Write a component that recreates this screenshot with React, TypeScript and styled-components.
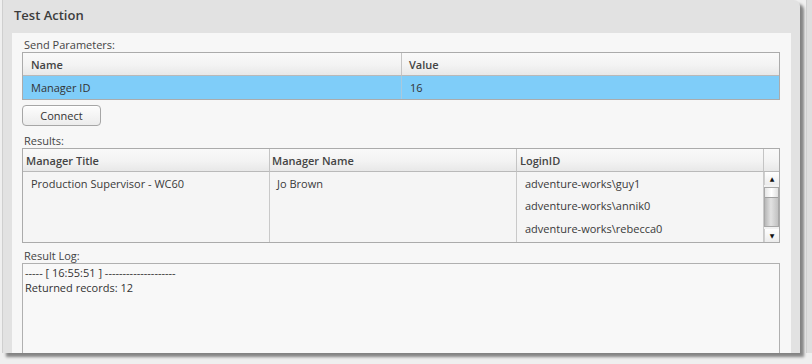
import React from "react";
import styled, { createGlobalStyle } from "styled-components";

const Global = createGlobalStyle`
  html, body { margin: 0; padding: 0; }
  body {
    width: 812px; height: 364px; overflow: hidden;
    background: #efefef;
    font-family: "Open Sans", "DejaVu Sans", sans-serif;
    font-size: 11px; color: #3a3a3a;
  }
`;

const Stage = styled.div`
  display: flex;
  width: 812px;
  height: 364px;
  padding: 0 0 0 2px;
  box-sizing: border-box;
`;

const Window = styled.div`
  width: 798px;
  height: 353px;
  display: flex;
  flex-direction: column;
  background-color: #e2e2e2;
  background-image: radial-gradient(#d9d9d9 0.6px, transparent 0.7px);
  background-size: 2px 2px;
  border-left: 1px solid #cfcfcf;
  border-top-right-radius: 6px;
  box-shadow: 4px 4px 3px rgba(0, 0, 0, 0.45);
  box-sizing: border-box;
`;

const TitleBar = styled.div`
  height: 33px;
  display: flex;
  align-items: center;
  padding: 0 0 3px 11px;
  box-sizing: border-box;
  font-size: 13px;
  font-weight: 600;
  color: #3c3c3c;
`;

const Panel = styled.div`
  flex: 1;
  margin: 0 9px 0 9px;
  background: #f7f7f7;
  padding: 4px 11px 0 10px;
  display: flex;
  flex-direction: column;
  min-height: 0;
`;

const Label = styled.div<{ $mt?: number }>`
  height: 15px;
  line-height: 15px;
  margin-top: ${(p) => p.$mt ?? 0}px;
  margin-left: 2px;
  color: #444;
  font-size: 11px;
`;

const Grid = styled.div<{ $cols: string }>`
  display: grid;
  grid-template-columns: ${(p) => p.$cols};
  border: 1px solid #ababab;
  background: #f5f5f5;
`;

const HeadCell = styled.div<{ $pad?: number; $last?: boolean }>`
  height: 22px;
  display: flex;
  align-items: center;
  padding-left: ${(p) => p.$pad ?? 8}px;
  font-weight: 600;
  font-size: 11px;
  color: #444;
  background: linear-gradient(#f9f9f9, #f3f3f3 55%, #e8e8e8);
  border-bottom: 1px solid #b9b9b9;
  border-right: ${(p) => (p.$last ? "none" : "1px solid #c4c4c4")};
  white-space: nowrap;
`;

const RowCell = styled.div<{ $selected?: boolean; $last?: boolean }>`
  height: 23px;
  display: flex;
  align-items: center;
  padding-left: 8px;
  font-size: 11px;
  color: #333;
  background: ${(p) => (p.$selected ? "#7fcdf9" : "transparent")};
  border-right: ${(p) => (p.$last ? "none" : "1px solid #a9c9dd")};
`;

const Button = styled.button`
  margin-top: 5px;
  width: 79px;
  height: 21px;
  border: 1px solid #a6a6a6;
  border-radius: 4px;
  background: linear-gradient(#fdfdfd, #ececec);
  font-family: inherit;
  font-size: 11px;
  color: #333;
  padding: 0;
  box-shadow: 0 1px 0 #fff inset;
`;

const BodyCol = styled.div<{ $last?: boolean }>`
  height: 70px;
  display: flex;
  flex-direction: column;
  border-right: ${(p) => (p.$last ? "none" : "1px solid #c9c9c9")};
`;

const BodyLine = styled.div<{ $pad?: number }>`
  height: 22.5px;
  display: flex;
  align-items: center;
  padding-left: ${(p) => p.$pad ?? 8}px;
  font-size: 11px;
  color: #3a3a3a;
  white-space: nowrap;
`;

const ScrollBar = styled.div`
  height: 70px;
  display: flex;
  flex-direction: column;
  background: #f2f2f2;
`;

const ScrollBtn = styled.div`
  height: 13px;
  display: flex;
  align-items: center;
  justify-content: center;
  font-size: 6px;
  color: #111;
  background: linear-gradient(#ffffff, #ececec);
  border-left: 1px solid #cfcfcf;
`;

const Track = styled.div`
  flex: 1;
  margin: 2px 0 2px 0;
  display: flex;
  flex-direction: column;
  background: linear-gradient(90deg, #b8b8b8, #e2e2e2 45%, #c2c2c2);
  border: 1px solid #a8a8a8;
`;

const Thumb = styled.div`
  height: 9px;
  background: linear-gradient(90deg, #e6e6e6, #ffffff 50%, #e0e0e0);
  border-bottom: 1px solid #a0a0a0;
`;

const LogBox = styled.div`
  flex: 1;
  border: 1px solid #b0b0b0;
  border-bottom: none;
  background: #f8f8f8;
  padding: 1px 2px;
  font-size: 11px;
  line-height: 15px;
  color: #333;
`;

const Side = styled.div`
  flex: 1;
  margin-left: 6px;
  background: #dedede;
  height: 353px;
  border-left: 1px solid #cfcfcf;
`;

export default function App() {
  return (
    <>
      <Global />
      <Stage>
        <Window>
          <TitleBar>Test Action</TitleBar>
          <Panel>
            <Label>Send Parameters:</Label>
            <Grid $cols="379px 1fr">
              <HeadCell>Name</HeadCell>
              <HeadCell $last $pad={7}>Value</HeadCell>
              <RowCell $selected>Manager ID</RowCell>
              <RowCell $selected $last>16</RowCell>
            </Grid>
            <div>
              <Button>Connect</Button>
            </div>
            <Label $mt={7}>Results:</Label>
            <Grid $cols="247px 247px 247px 1fr">
              <HeadCell $pad={3}>Manager Title</HeadCell>
              <HeadCell $pad={2}>Manager Name</HeadCell>
              <HeadCell $pad={3}>LoginID</HeadCell>
              <HeadCell $last $pad={0} />
              <BodyCol>
                <BodyLine>Production Supervisor - WC60</BodyLine>
              </BodyCol>
              <BodyCol>
                <BodyLine $pad={7}>Jo Brown</BodyLine>
              </BodyCol>
              <BodyCol>
                <BodyLine>adventure-works\guy1</BodyLine>
                <BodyLine>adventure-works\annik0</BodyLine>
                <BodyLine>adventure-works\rebecca0</BodyLine>
              </BodyCol>
              <ScrollBar>
                <ScrollBtn>▲</ScrollBtn>
                <Track>
                  <Thumb />
                </Track>
                <ScrollBtn>▼</ScrollBtn>
              </ScrollBar>
            </Grid>
            <Label $mt={5}>Result Log:</Label>
            <LogBox>
              <div>----- [ 16:55:51 ] --------------------</div>
              <div>Returned records: 12</div>
            </LogBox>
          </Panel>
        </Window>
        <Side />
      </Stage>
    </>
  );
}
